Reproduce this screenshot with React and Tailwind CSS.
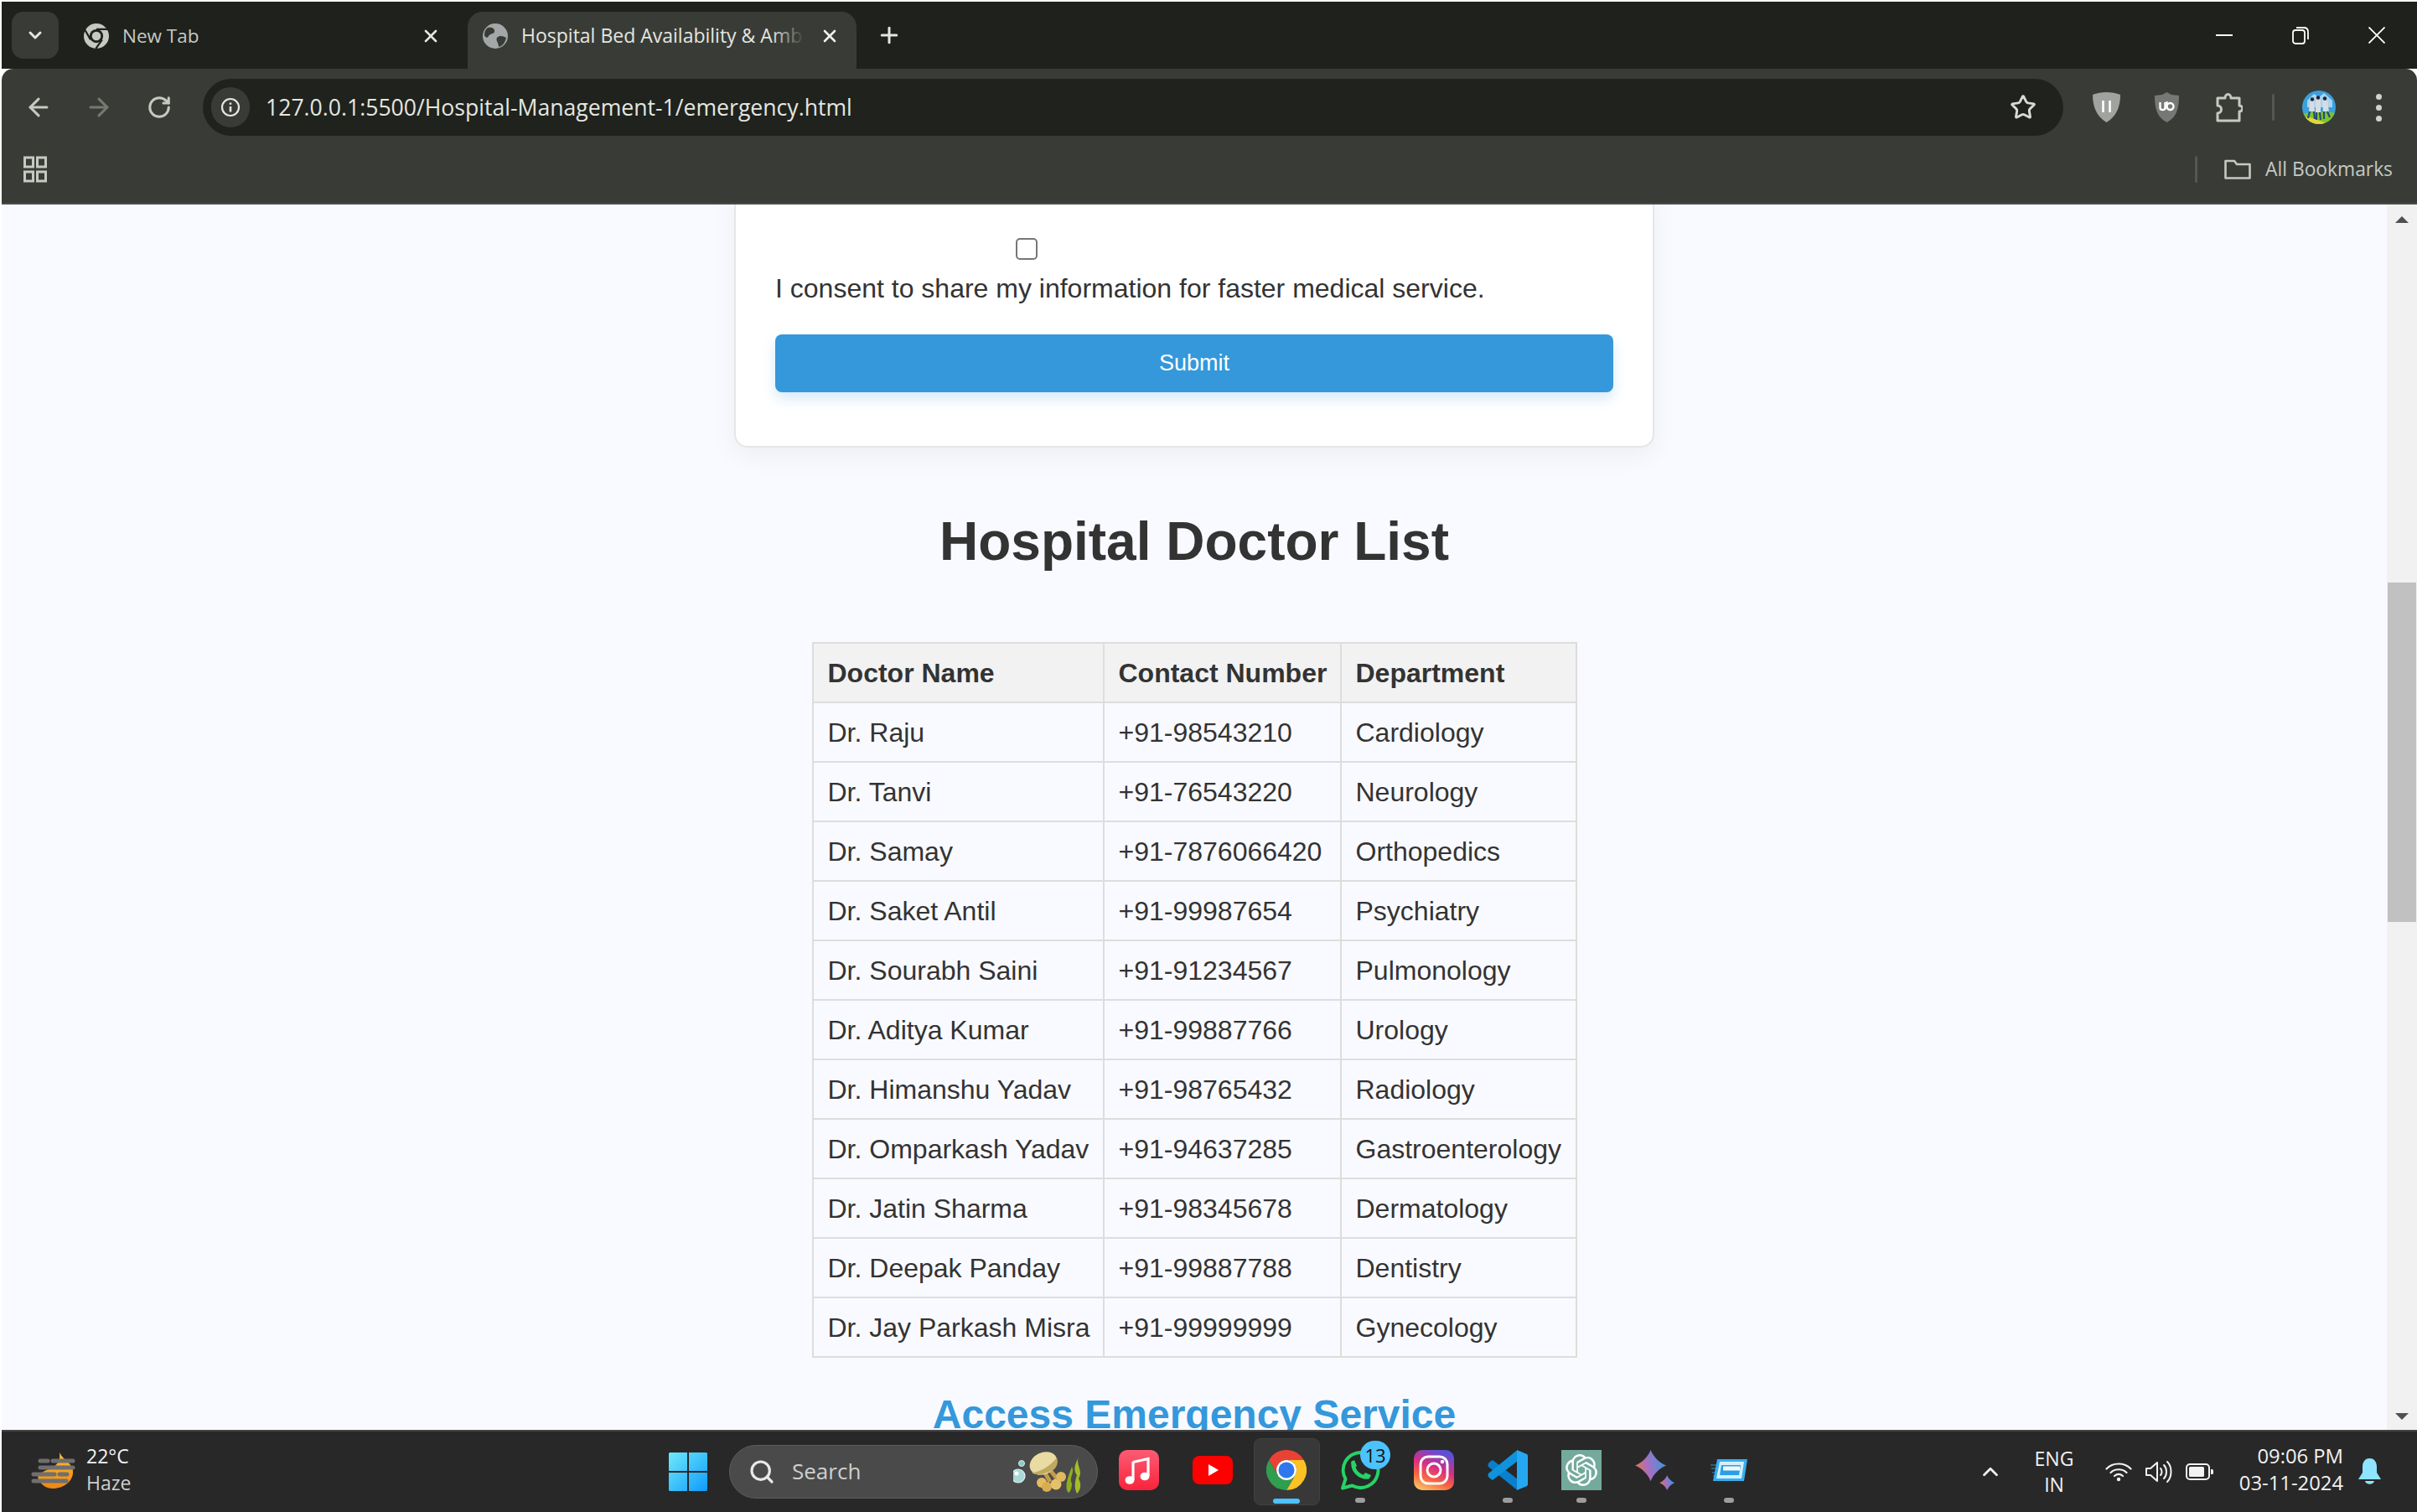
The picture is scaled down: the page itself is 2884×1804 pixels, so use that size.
import { ArrowLeft, ArrowRight, RotateCw, Star, Search, ChevronDown, ChevronUp, X, Plus } from "lucide-react"
import { SiOpenai } from "react-icons/si"

const doctors = [
  ["Dr. Raju", "+91-98543210", "Cardiology"],
  ["Dr. Tanvi", "+91-76543220", "Neurology"],
  ["Dr. Samay", "+91-7876066420", "Orthopedics"],
  ["Dr. Saket Antil", "+91-99987654", "Psychiatry"],
  ["Dr. Sourabh Saini", "+91-91234567", "Pulmonology"],
  ["Dr. Aditya Kumar", "+91-99887766", "Urology"],
  ["Dr. Himanshu Yadav", "+91-98765432", "Radiology"],
  ["Dr. Omparkash Yadav", "+91-94637285", "Gastroenterology"],
  ["Dr. Jatin Sharma", "+91-98345678", "Dermatology"],
  ["Dr. Deepak Panday", "+91-99887788", "Dentistry"],
  ["Dr. Jay Parkash Misra", "+91-99999999", "Gynecology"],
]

const ChromeMono = () => (
  <svg viewBox="0 0 48 48" className="w-[30px] h-[30px]">
    <circle cx="24" cy="24" r="24" fill="#c6c9c2" />
    <circle cx="24" cy="24" r="13" fill="#1e211c" />
    <circle cx="24" cy="24" r="8.5" fill="#c6c9c2" />
    <path d="M24 11H46M13 31L2 12M35 31L23 48" stroke="#1e211c" strokeWidth="3.5" />
  </svg>
)

const GlobeFav = () => (
  <svg viewBox="0 0 30 30" className="w-[30px] h-[30px]">
    <circle cx="15" cy="15" r="15" fill="#a3a7a8" />
    <path d="M6 5C11 4 15 6 14 10 13 13 8 12 7 15 6 18 3 17 2 14 2 10 3 7 6 5ZM28 17C24 15 20 14 17 17 15 20 19 23 19 28 24 27 27 22 28 17Z" fill="#393c36" />
  </svg>
)

const ShieldPause = () => (
  <svg viewBox="0 0 33 36" className="w-[33px] h-[36px]">
    <path d="M16.5 0C22 0 28 1 33 3 33 18 28 29 16.5 36 5 29 0 18 0 3 5 1 11 0 16.5 0Z" fill="#a1a3a0" />
    <path d="M12.5 10V24M20.5 10V24" stroke="#fff" strokeWidth="2.6" />
  </svg>
)

const ShieldUb = () => (
  <svg viewBox="0 0 29 36" className="w-[29px] h-[36px]">
    <path d="M14.5 0L20 3 29 4C29 20 26 30 14.5 36 3 30 0 20 0 4L9 3Z" fill="#767876" />
    <path d="M6.5 12V18.5C6.5 22 12.5 22 12.5 18.5V12" fill="none" stroke="#fff" strokeWidth="2.4" />
    <circle cx="18.5" cy="17" r="4" fill="none" stroke="#fff" strokeWidth="2.4" />
    <path d="M14.5 11V20" stroke="#fff" strokeWidth="2.2" />
  </svg>
)

const PuzzleIcon = () => (
  <svg viewBox="0 0 32 36" className="w-[32px] h-[36px]" fill="none" stroke="#c6c9c2" strokeWidth="3" strokeLinejoin="round">
    <path d="M2 7H11C11 1 18 1 18 7H28V16C33 16 33 23 28 23V34H2V25C8 25 8 16 2 16Z" />
  </svg>
)

const Avatar = () => (
  <svg viewBox="0 0 40 40" className="w-[40px] h-[40px] rounded-full">
    <rect width="40" height="40" fill="#3aa0e0" />
    <path d="M6 12L14 4 20 8 26 3 36 12V20H6Z" fill="#a9d4ee" />
    <path d="M0 28C12 25 28 25 40 27V40H0Z" fill="#7cc52c" />
    <path d="M0 32C10 30 24 38 32 40H0Z" fill="#e3d73a" />
    <path d="M9 13L14 12 15 25 8 25ZM16 11H22V26H16ZM24 12H30L32 25H25Z" fill="#d5dde3" />
    <path d="M9 25L7 33M14 25L15 34M17 26L17 35M21 26L22 35M26 25L26 34M30 25L33 32" stroke="#2b4a7a" strokeWidth="2.2" />
    <circle cx="12" cy="10.5" r="2.2" fill="#223" />
    <circle cx="19" cy="8.5" r="2.2" fill="#223" />
    <circle cx="27" cy="9.5" r="2.2" fill="#223" />
  </svg>
)

const GridIcon = () => (
  <svg viewBox="0 0 28 32" className="w-[28px] h-[32px]" fill="none" stroke="#c6c9c2" strokeWidth="3">
    <rect x="1.5" y="2" width="10" height="11" />
    <rect x="16.5" y="2" width="10" height="11" />
    <rect x="1.5" y="19" width="10" height="11" />
    <rect x="16.5" y="19" width="10" height="11" />
  </svg>
)

const FolderIcon = () => (
  <svg viewBox="0 0 32 24" className="w-[32px] h-[24px]" fill="none" stroke="#c6c9c2" strokeWidth="2.6" strokeLinejoin="round">
    <path d="M1.5 2H12L15 6H30.5V22.5H1.5Z" />
  </svg>
)

const InfoIcon = () => (
  <svg viewBox="0 0 24 24" className="w-[24px] h-[24px]" fill="none" stroke="#e4e6e1" strokeWidth="2.2">
    <circle cx="12" cy="12" r="10" />
    <path d="M12 11V17.5M12 6.5V8.8" strokeWidth="2.6" />
  </svg>
)

const WeatherIcon = () => (
  <svg viewBox="0 0 56 50" className="w-[56px] h-[50px]">
    <defs>
      <linearGradient id="moon" x1="0" y1="0" x2="0" y2="1">
        <stop offset="0" stopColor="#fcc033" />
        <stop offset="1" stopColor="#ee8612" />
      </linearGradient>
    </defs>
    <path d="M35 2C40 12 50 14 51 24 52 36 40 45 27 45 18 45 11 39 9 31 14 20 38 24 35 2Z" fill="url(#moon)" />
    <path d="M12 12H21M27 12H51M12 20H51M4 28H29M35 28H44M4 36H43" stroke="#6f6f6f" strokeWidth="5" strokeLinecap="round" />
  </svg>
)

const WinLogo = () => (
  <svg viewBox="0 0 46 46" className="w-[46px] h-[46px]">
    <defs>
      <linearGradient id="win" x1="0" y1="0" x2="1" y2="1">
        <stop offset="0" stopColor="#6fe9fb" />
        <stop offset="1" stopColor="#0e9bfb" />
      </linearGradient>
    </defs>
    <path d="M1 0H22V22H0V1ZM24 0H45L46 1V22H24ZM0 24H22V46H1L0 45ZM24 24H46V45L45 46H24Z" fill="url(#win)" />
  </svg>
)

const SearchArt = () => (
  <svg viewBox="0 0 90 64" className="w-[90px] h-[64px]">
    <circle cx="6" cy="37" r="8" fill="#a9d8d6" stroke="#e3f2f0" strokeWidth="1.2" />
    <circle cx="4" cy="34" r="2.5" fill="#fff" />
    <circle cx="10" cy="22" r="3.5" fill="#8ccbc6" stroke="#d8eeea" />
    <path d="M36 30L44 44M44 30L52 40" stroke="#c49b4a" strokeWidth="5" />
    <ellipse cx="36" cy="22" rx="17" ry="13" transform="rotate(-25 36 22)" fill="#e9dba2" />
    <path d="M22 33C30 33 44 26 52 15 55 24 50 31 40 33 33 36 26 36 22 33Z" fill="#bfa95e" />
    <circle cx="34" cy="45" r="6" fill="#e3bb62" />
    <circle cx="40" cy="50" r="6" fill="#d8ad50" />
    <circle cx="51" cy="47" r="6.5" fill="#e6c16c" />
    <circle cx="57" cy="38" r="6" fill="#e0b95f" />
    <path d="M70 26C74 34 66 38 70 46 70 52 68 56 66 57 60 52 66 36 70 26Z" fill="#8fae1e" />
    <path d="M78 14C74 24 84 30 78 40 82 48 80 54 76 58 72 50 74 42 76 36 70 28 76 20 78 14Z" fill="#a2bd28" />
  </svg>
)

const MusicIcon = () => (
  <svg viewBox="0 0 48 48" className="w-[48px] h-[48px]">
    <defs>
      <linearGradient id="music" x1="0" y1="0" x2="0" y2="1">
        <stop offset="0" stopColor="#fb5c74" />
        <stop offset="1" stopColor="#fa233b" />
      </linearGradient>
    </defs>
    <rect width="48" height="48" rx="10" fill="url(#music)" />
    <path d="M17 14.5L35 10.5V31" fill="none" stroke="#fff" strokeWidth="3.2" />
    <path d="M17 14V36" stroke="#fff" strokeWidth="3.2" />
    <ellipse cx="13" cy="36" rx="5.5" ry="4.8" fill="#fff" />
    <ellipse cx="31" cy="31.5" rx="5.5" ry="4.8" fill="#fff" />
  </svg>
)

const YoutubeIcon = () => (
  <svg viewBox="0 0 48 34" className="w-[48px] h-[34px]">
    <rect width="48" height="34" rx="8" fill="#fe0000" />
    <path d="M19 10L31 17 19 24Z" fill="#fff" />
  </svg>
)

const ChromeIcon = () => (
  <svg viewBox="0 0 48 48" className="w-[48px] h-[48px]">
    <path d="M3.2 12A24 24 0 0 1 44.8 12H24A12 12 0 0 0 13.6 30Z" fill="#e94235" />
    <path d="M44.8 12A24 24 0 0 1 24 48L34.4 30A12 12 0 0 0 24 12Z" fill="#fcc224" />
    <path d="M24 48A24 24 0 0 1 3.2 12L13.6 30A12 12 0 0 0 34.4 30Z" fill="#2f9e4f" />
    <circle cx="24" cy="24" r="12" fill="#fff" />
    <circle cx="24" cy="24" r="9.5" fill="#2f77ec" />
  </svg>
)

const WhatsappIcon = () => (
  <svg viewBox="0 0 48 48" className="w-[48px] h-[48px]">
    <path d="M24.5 3A21 21 0 0 0 6.5 34.5L3 45.5 14.5 42.5A21 21 0 1 0 24.5 3Z" fill="none" stroke="#25d366" strokeWidth="4" strokeLinejoin="round" />
    <path d="M15.5 15C15 25 23 33 33 32.5" fill="none" stroke="#25d366" strokeWidth="4.5" strokeLinecap="round" />
    <path d="M13 15L17 12 20 19 17 22ZM27 31L30 27 37 30 35 34Z" fill="#25d366" />
  </svg>
)

const InstaIcon = () => (
  <svg viewBox="0 0 48 48" className="w-[48px] h-[48px]">
    <defs>
      <linearGradient id="insta" x1="0.2" y1="1" x2="0.6" y2="0">
        <stop offset="0" stopColor="#fdc468" />
        <stop offset="0.3" stopColor="#f8663f" />
        <stop offset="0.6" stopColor="#d92d82" />
        <stop offset="1" stopColor="#5b51d8" />
      </linearGradient>
    </defs>
    <rect width="48" height="48" rx="10" fill="url(#insta)" />
    <rect x="8" y="8" width="32" height="32" rx="9" fill="none" stroke="#fff" strokeWidth="3" />
    <circle cx="24" cy="24" r="8" fill="none" stroke="#fff" strokeWidth="3" />
    <circle cx="34" cy="14" r="2.2" fill="#fff" />
  </svg>
)

const VscodeIcon = () => (
  <svg viewBox="0 0 48 48" className="w-[48px] h-[48px]">
    <path d="M3 14L6 12 36 35V48L33 46 1 20Q0 18 1 16Z" fill="#0a7fcc" />
    <path d="M3 34L6 36 36 13V0L33 2 1 28Q0 30 1 32Z" fill="#0f93dc" />
    <path d="M35 0L47 5Q48 6 48 7V41Q48 42 47 43L35 48Z" fill="#25a8f2" />
  </svg>
)

const GeminiIcon = () => (
  <svg viewBox="0 0 49 49" className="w-[48px] h-[48px]">
    <defs>
      <linearGradient id="gem" x1="0" y1="0.6" x2="1" y2="0.4">
        <stop offset="0" stopColor="#e8734a" />
        <stop offset="0.4" stopColor="#a96fc0" />
        <stop offset="1" stopColor="#3a95e2" />
      </linearGradient>
    </defs>
    <path d="M19 0C22 8 30 16 38 19 30 22 22 30 19 38 16 30 8 22 0 19 8 16 16 8 19 0Z" fill="url(#gem)" />
    <path d="M39 31C40.5 35 44 38.5 48 40 44 41.5 40.5 45 39 49 37.5 45 34 41.5 30 40 34 38.5 37.5 35 39 31Z" fill="url(#gem)" />
  </svg>
)

const WindowIcon = () => (
  <svg viewBox="0 0 44 28" className="w-[44px] h-[28px]">
    <path d="M0 8H8M1 12H7M2 17H7M3 21H7" stroke="#3a9fdc" strokeWidth="1.5" opacity="0.6" />
    <path d="M8 1H44L40 27H3Z" fill="#36aef0" />
    <path d="M11 4H40L37 24H7Z" fill="#d4effc" />
    <path d="M13 8H36L34 20H11Z" fill="#2a9fe6" />
    <rect x="15" y="9.5" width="20" height="5" fill="#f2f8fc" />
  </svg>
)

const TrayWifi = () => (
  <svg viewBox="0 0 32 24" className="w-[32px] h-[24px]" fill="none" stroke="#f2f2f2" strokeWidth="2.2" strokeLinecap="round">
    <path d="M1.5 8.5C9 0.5 23 0.5 30.5 8.5M6.5 13C11.5 8 20.5 8 25.5 13M11 17C14 14.5 18 14.5 21 17" />
    <circle cx="16" cy="21" r="2.2" fill="#f2f2f2" stroke="none" />
  </svg>
)

const TraySpeaker = () => (
  <svg viewBox="0 0 33 28" className="w-[33px] h-[28px]" fill="none" stroke="#f2f2f2" strokeWidth="2">
    <path d="M1 10H6L14 3V25L6 18H1Z" strokeLinejoin="round" />
    <path d="M18 10C20 12 20 16 18 18M22 6C26 10 26 18 22 22M26 2C32 8 32 20 26 26" strokeLinecap="round" />
  </svg>
)

const TrayBattery = () => (
  <svg viewBox="0 0 33 20" className="w-[33px] h-[20px]">
    <rect x="1" y="1" width="27" height="18" rx="4" fill="none" stroke="#f2f2f2" strokeWidth="2" />
    <rect x="4" y="4" width="18" height="12" rx="1.5" fill="#f2f2f2" />
    <path d="M30 7H31.5Q33 7 33 8.5V11.5Q33 13 31.5 13H30Z" fill="#f2f2f2" />
  </svg>
)

const BellIcon = () => (
  <svg viewBox="0 0 27 32" className="w-[27px] h-[32px]" fill="#8fe4ff">
    <path d="M13.5 0C19.5 0 22 5 22 10V17L27 25H0L5 17V10C5 5 7.5 0 13.5 0Z" />
    <path d="M8 27H19C18 32 9 32 8 27Z" />
  </svg>
)

const TaskSlot = ({ children, dot, active }) => (
  <div className="relative w-[88px] h-[80px] flex items-center justify-center">
    {active && <div className="absolute left-[5px] top-0 w-[79px] h-[80px] rounded-[8px] bg-[#383838] border border-[#414141]" />}
    <div className="relative -mt-[4px]">{children}</div>
    {active && <div className="absolute left-[28px] bottom-[2px] w-[32px] h-[6px] rounded-full bg-[#4cc2ff]" />}
    {dot && <div className="absolute left-[38px] bottom-[3px] w-[12px] h-[6px] rounded-full bg-[#9d9d9d]" />}
  </div>
)

function ScrollArrow({ up }) {
  return (
    <svg viewBox="0 0 16 8" className={up ? "w-[16px] h-[8px] mt-[14px]" : "w-[16px] h-[8px] rotate-180"}>
      <path d="M8 0L16 8H0Z" fill="#505050" />
    </svg>
  )
}

export default function App() {
  return (
    <div className="w-[2884px] h-[1804px] overflow-hidden bg-white pt-[2px] pl-[2px] flex flex-col font-['Liberation_Sans',Arial,sans-serif]">
      {/* tab strip */}
      <div className="h-[80px] shrink-0 bg-[#1e211c] flex items-start font-['Open_Sans',sans-serif] text-[22.5px]">
        <div className="ml-[12px] mt-[12px] w-[56px] h-[56px] rounded-[14px] bg-[#393c36] flex items-center justify-center">
          <ChevronDown size={24} color="#e4e6e1" strokeWidth={3} />
        </div>
        <div className="w-[488px] h-[68px] mt-[12px] flex items-center pl-[30px] pr-[32px] pb-[11px] text-[#c6c9c2]">
          <ChromeMono />
          <span className="ml-[16px]">New Tab</span>
          <X size={24} color="#e4e6e1" strokeWidth={2.6} className="ml-auto" />
        </div>
        <div className="relative w-[464px] h-[68px] mt-[12px] rounded-t-[18px] bg-[#393c36] flex items-center pl-[18px] pb-[11px] text-[#e4e6e1]">
          <GlobeFav />
          <span className="ml-[16px] w-[336px] whitespace-nowrap text-[23px]">Hospital Bed Availability &amp; Amb</span>
          <div className="absolute left-[362px] top-[6px] w-[40px] h-[48px] bg-gradient-to-r from-transparent to-[#393c36]" />
          <X size={24} color="#f0f0f0" strokeWidth={2.6} className="ml-[20px]" />
        </div>
        <div className="ml-[19px] mt-[12px] w-[40px] h-[56px] flex items-center justify-center">
          <Plus size={30} color="#e4e6e1" strokeWidth={2.4} />
        </div>
        <div className="ml-auto mr-[3px] h-[80px] flex items-center">
          <div className="w-[91px] flex justify-center"><div className="w-[20px] h-[2px] bg-white" /></div>
          <div className="w-[91px] flex justify-center">
            <svg viewBox="0 0 20 21" className="w-[20px] h-[21px]" fill="none" stroke="#fff" strokeWidth="1.8">
              <rect x="1" y="4" width="14" height="16" rx="3" />
              <path d="M5 1H14C17 1 19 3 19 6V15" />
            </svg>
          </div>
          <div className="w-[91px] flex justify-center">
            <svg viewBox="0 0 20 20" className="w-[20px] h-[20px]" stroke="#fff" strokeWidth="1.8">
              <path d="M0.5 0.5L19.5 19.5M19.5 0.5L0.5 19.5" />
            </svg>
          </div>
        </div>
      </div>

      {/* toolbar + bookmarks */}
      <div className="h-[162px] shrink-0 bg-[#393c36] rounded-t-[14px] border-b-2 border-[#4a4c49] font-['Open_Sans',sans-serif]">
        <div className="h-[92px] pt-[12px] flex items-start">
          <div className="ml-[8px] w-[72px] h-[68px] flex items-center justify-center"><ArrowLeft size={34} color="#c6c9c2" strokeWidth={2.2} /></div>
          <div className="w-[72px] h-[68px] flex items-center justify-center"><ArrowRight size={34} color="#767972" strokeWidth={2.2} /></div>
          <div className="w-[72px] h-[68px] flex items-center justify-center"><RotateCw size={30} color="#c6c9c2" strokeWidth={2.4} /></div>
          <div className="ml-[16px] w-[2220px] h-[68px] rounded-full bg-[#1f221d] flex items-center pl-[10px] pr-[32px]">
            <div className="w-[46px] h-[48px] rounded-full bg-[#393c36] flex items-center justify-center"><InfoIcon /></div>
            <span className="ml-[19px] mt-[2px] text-[26.6px] text-[#e4e6e1]">127.0.0.1:5500/Hospital-Management-1/emergency.html</span>
            <Star size={32} color="#d8dad5" strokeWidth={2.2} className="ml-auto" />
          </div>
          <div className="ml-[15px] w-[72px] h-[68px] flex items-center justify-center"><ShieldPause /></div>
          <div className="w-[72px] h-[68px] flex items-center justify-center"><ShieldUb /></div>
          <div className="ml-[3px] w-[72px] h-[68px] flex items-center justify-center"><PuzzleIcon /></div>
          <div className="ml-[15px] mt-[18px] w-[3px] h-[32px] rounded-full bg-[#555852]" />
          <div className="ml-[33px] mt-[14px]"><Avatar /></div>
          <div className="ml-[48px] mt-[18px] flex flex-col gap-[6px]">
            <div className="w-[7px] h-[7px] rounded-full bg-[#d0d2cd]" />
            <div className="w-[7px] h-[7px] rounded-full bg-[#d0d2cd]" />
            <div className="w-[7px] h-[7px] rounded-full bg-[#d0d2cd]" />
          </div>
        </div>
        <div className="h-[68px] flex items-center pl-[26px] pb-[12px]">
          <GridIcon />
          <div className="ml-auto w-[3px] h-[32px] rounded-full bg-[#555852]" />
          <div className="ml-[32px]"><FolderIcon /></div>
          <span className="ml-[17px] mr-[29px] text-[22.8px] text-[#c6c9c2]">All Bookmarks</span>
        </div>
      </div>

      {/* page */}
      <div className="flex-1 min-h-0 flex overflow-hidden bg-[#f9faff] text-[#333]">
        <div className="flex-1 min-w-0 overflow-hidden flex flex-col items-center">
          <div className="w-[1098px] shrink-0 -mt-[20px] bg-white rounded-[16px] border-2 border-[#e6e6e6] px-[47px] pb-[64px] shadow-[0_10px_30px_rgba(0,0,0,0.05)]">
            <input type="checkbox" className="block appearance-none w-[26px] h-[26px] mt-[58px] ml-[287px] bg-white border-2 border-[#767676] rounded-[5px]" />
            <p className="mt-[15px] text-[32px] leading-[38px]">I consent to share my information for faster medical service.</p>
            <button className="block w-full h-[69px] mt-[36px] rounded-[8px] bg-[#3498db] text-white text-[27px] shadow-[0_8px_16px_rgba(52,152,219,0.2)]">Submit</button>
          </div>
          <h1 className="mt-[75px] text-[64px] leading-[74px] font-bold text-[#333]">Hospital Doctor List</h1>
          <table className="mt-[83px] w-[911px] shrink-0 table-fixed border-collapse text-[32px]">
            <colgroup>
              <col className="w-[347px]" />
              <col className="w-[283px]" />
              <col className="w-[281px]" />
            </colgroup>
            <thead>
              <tr className="h-[71px] bg-[#f2f2f2]">
                <th className="border-2 border-[#ddd] pl-[17px] text-left font-bold">Doctor Name</th>
                <th className="border-2 border-[#ddd] pl-[17px] text-left font-bold">Contact Number</th>
                <th className="border-2 border-[#ddd] pl-[17px] text-left font-bold">Department</th>
              </tr>
            </thead>
            <tbody>
              {doctors.map((d) => (
                <tr key={d[0]} className="h-[71px]">
                  {d.map((c) => (
                    <td key={c} className="border-2 border-[#ddd] pl-[17px] whitespace-nowrap">{c}</td>
                  ))}
                </tr>
              ))}
            </tbody>
          </table>
          <h2 className="mt-[40px] text-[48px] leading-[56px] font-bold text-[#3498db] shrink-0">Access Emergency Service</h2>
        </div>
        <div className="w-[36px] shrink-0 bg-[#f1f1f1] flex flex-col items-center relative">
          <ScrollArrow up />
          <div className="absolute left-0 right-0 top-[451px] h-[405px] mx-[1px] bg-[#c1c1c1]" />
          <div className="mt-auto mb-[12px]"><ScrollArrow /></div>
        </div>
      </div>

      {/* taskbar */}
      <div className="h-[98px] shrink-0 bg-[#282828] border-t-2 border-[#444] flex items-center font-['Open_Sans',sans-serif] text-[#f2f2f2] text-[23px]">
        <div className="w-[775px] shrink-0 flex items-center pl-[34px]">
          <WeatherIcon />
          <div className="ml-[11px] -mt-[6px] leading-[32px]">
            <div>22°C</div>
            <div className="text-[#cfcfcf]">Haze</div>
          </div>
        </div>
        <div className="w-[88px] shrink-0 flex justify-center"><WinLogo /></div>
        <div className="ml-[5px] w-[440px] h-[64px] shrink-0 rounded-full bg-[#4a4a4a] border border-[#5c5c5c] flex items-center pl-[22px] pr-[10px]">
          <Search size={32} color="#e8e8e8" strokeWidth={2.4} />
          <span className="ml-[20px] -mt-[2px] text-[#cfcfcf] text-[26px]">Search</span>
          <div className="ml-auto"><SearchArt /></div>
        </div>
        <div className="ml-[5px] shrink-0 flex items-center">
          <TaskSlot><MusicIcon /></TaskSlot>
          <TaskSlot><YoutubeIcon /></TaskSlot>
          <TaskSlot active><ChromeIcon /></TaskSlot>
          <TaskSlot dot>
            <div className="relative w-[48px] h-[48px]">
              <WhatsappIcon />
              <div className="absolute -right-[12px] -top-[11px] w-[36px] h-[34px] rounded-full bg-[#4cc2ff] text-[#111] text-[22px] flex items-center justify-center">13</div>
            </div>
          </TaskSlot>
          <TaskSlot><InstaIcon /></TaskSlot>
          <TaskSlot dot><VscodeIcon /></TaskSlot>
          <TaskSlot dot>
            <div className="w-[48px] h-[48px] bg-[#74aa9c] flex items-center justify-center"><SiOpenai size={38} color="#fff" /></div>
          </TaskSlot>
          <TaskSlot><GeminiIcon /></TaskSlot>
          <TaskSlot dot><WindowIcon /></TaskSlot>
        </div>
        <ChevronUp size={30} color="#f2f2f2" strokeWidth={2.2} className="ml-[253px] shrink-0" />
        <div className="ml-[26px] w-[70px] shrink-0 text-center leading-[31px]">
          <div>ENG</div>
          <div>IN</div>
        </div>
        <div className="ml-[26px] shrink-0"><TrayWifi /></div>
        <div className="ml-[16px] shrink-0"><TraySpeaker /></div>
        <div className="ml-[15px] shrink-0"><TrayBattery /></div>
        <div className="ml-[20px] -mt-[6px] w-[135px] shrink-0 text-right text-[23.8px] leading-[32px]">
          <div>09:06 PM</div>
          <div>03-11-2024</div>
        </div>
        <div className="ml-[18px] shrink-0"><BellIcon /></div>
      </div>
    </div>
  )
}
